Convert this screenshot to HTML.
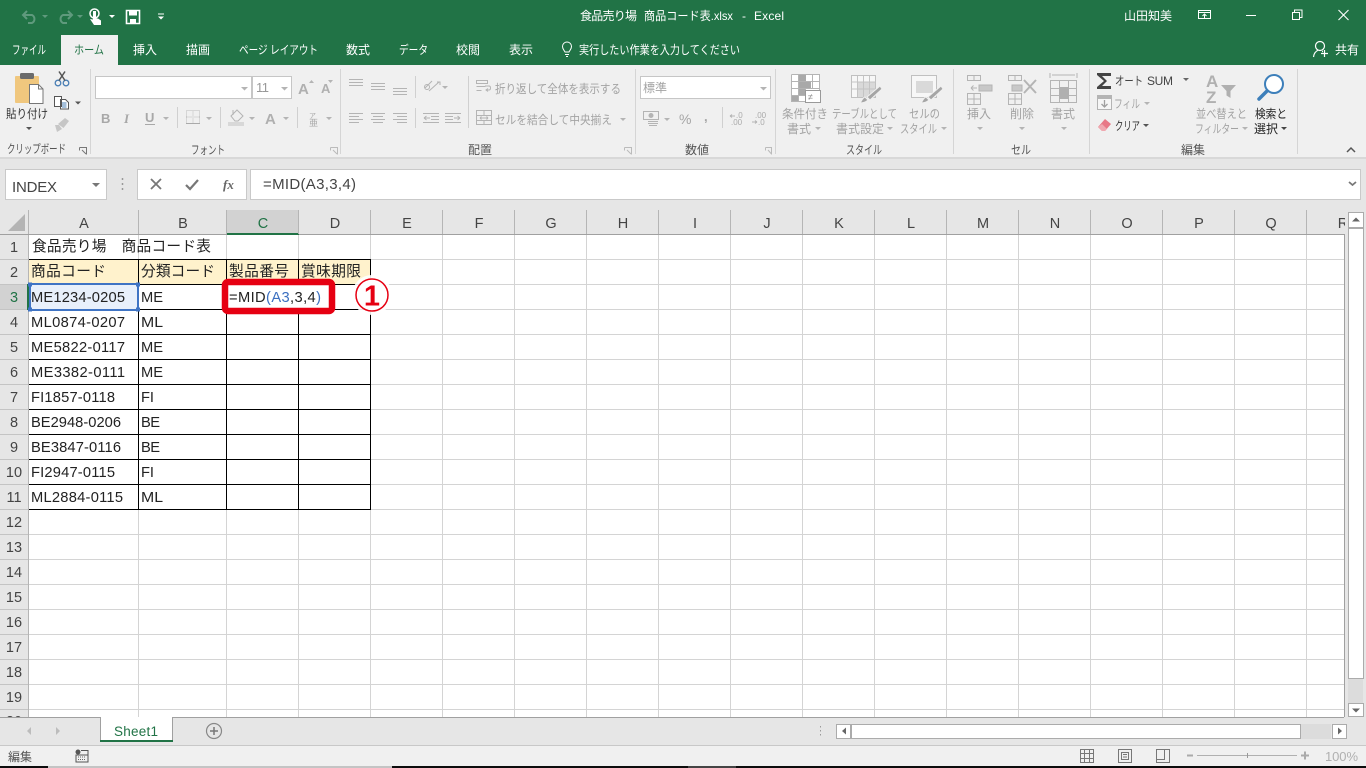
<!DOCTYPE html>
<html lang="ja"><head><meta charset="utf-8"><title>Excel</title>
<style>
html,body{margin:0;padding:0;width:1366px;height:768px;overflow:hidden;background:#fff}
svg{display:block}
text{font-family:"Liberation Sans","Noto Sans CJK JP",sans-serif;white-space:pre}
.w{fill:#fff;font-size:12px}
.d{fill:#a3a3a3;font-size:12px}
.c{fill:#222;font-size:14.7px}
.h{fill:#444;font-size:14.5px;text-anchor:middle}
.ic{fill:none;stroke:#b4b4b4;stroke-width:1}
.ar{fill:#b4b4b4}
</style></head><body>
<svg width="1366" height="768" viewBox="0 0 1366 768" xmlns="http://www.w3.org/2000/svg">
<!-- backgrounds -->
<rect width="1366" height="65" fill="#217346"/>
<rect y="65" width="1366" height="93" fill="#f0f0f0"/>
<rect y="157" width="1366" height="2" fill="#d8d8d8"/>
<rect y="159" width="1366" height="51" fill="#e6e6e6"/>
<rect x="61" y="35" width="57" height="30" fill="#f0f0f0"/>

<!-- QAT -->
<g fill="none" stroke="#5f9a7d" stroke-width="2">
<path d="M24 15 H32 A4.500 4.500 0 0 1 32 23 H28"/><path d="M27 11 L23 15 L27 19"/>
<path d="M71 15 H63 A4.500 4.500 0 0 0 63 23 H67"/><path d="M68 11 L72 15 L68 19"/>
</g>
<path d="M42 15h6l-3 3zM77 15h6l-3 3z" fill="#5f9a7d"/>
<circle cx="94.500" cy="13.500" r="4.500" fill="none" stroke="#fff" stroke-width="1.500"/>
<rect x="93" y="11" width="3" height="8" fill="#fff"/>
<path d="M90 19l3 0.500v-1h5l3 2v4.500h-7z" fill="#fff"/>
<path d="M109 15h6l-3 3z" fill="#fff"/>
<path d="M126.500 10.500h13v13h-13z" fill="none" stroke="#fff" stroke-width="1.600"/>
<rect x="129" y="11" width="8" height="4.500" fill="#fff"/><rect x="130" y="19" width="6" height="4.500" fill="#fff"/>
<path d="M158 13.500h6v1h-6zM158 16.500h6l-3 3z" fill="#fff"/>

<!-- title -->
<text x="580" y="20" class="w" textLength="57">食品売り場</text>
<text x="644" y="20" class="w" textLength="89" lengthAdjust="spacingAndGlyphs">商品コード表.xlsx</text>
<text x="742" y="20" class="w">-</text>
<text x="754" y="20" class="w" textLength="30">Excel</text>
<text x="1124" y="20" class="w" textLength="48">山田知美</text>
<g fill="none" stroke="#fff">
<path d="M1198.500 10.500h12v8h-12zM1198.500 12.500h12M1204.500 18v-4M1202.500 16l2-2 2 2"/>
<path d="M1246 15.500h10" />
<path d="M1292.500 12.500h7v7h-7zM1294.500 12v-2h7.500v7.500h-2"/>
<path d="M1338.500 10l10 10M1348.500 10l-10 10" stroke-width="1.100"/>
</g>

<!-- tabs -->
<text x="12" y="54" class="w" textLength="34" lengthAdjust="spacingAndGlyphs">ファイル</text>
<text x="74" y="54" font-size="12" fill="#217346" textLength="30" lengthAdjust="spacingAndGlyphs">ホーム</text>
<text x="133" y="54" class="w" textLength="24">挿入</text>
<text x="186" y="54" class="w" textLength="24">描画</text>
<text x="239" y="54" class="w" textLength="79" lengthAdjust="spacingAndGlyphs">ページ レイアウト</text>
<text x="346" y="54" class="w" textLength="24">数式</text>
<text x="399" y="54" class="w" textLength="29" lengthAdjust="spacingAndGlyphs">データ</text>
<text x="456" y="54" class="w" textLength="24">校閲</text>
<text x="509" y="54" class="w" textLength="24">表示</text>
<path d="M565 52c-1-2-2.500-3-2.500-5.500a4.500 4.500 0 0 1 9 0c0 2.500-1.500 3.500-2.500 5.500zM565 54.500h4M566 56.500h2" fill="none" stroke="#fff"/>
<text x="579" y="54" class="w" textLength="161" lengthAdjust="spacingAndGlyphs">実行したい作業を入力してください</text>
<circle cx="1320" cy="46" r="4.500" fill="none" stroke="#fff" stroke-width="1.200"/>
<path d="M1313.500 57c.5-4 2.500-6 5-7M1322 51.500h1" fill="none" stroke="#fff" stroke-width="1.200"/>
<path d="M1321 53.500h7M1324.500 50v7" fill="none" stroke="#fff" stroke-width="1.200"/>
<text x="1335" y="54" class="w" textLength="24">共有</text>

<!-- group separators -->
<path d="M90.500 69v85M340.500 69v85M635.500 69v85M775.500 69v85M953.500 69v85M1089.500 69v85M1297.500 69v85" stroke="#d5d5d5" fill="none"/>

<!-- clipboard -->
<rect x="15" y="76" width="24" height="27" rx="1" fill="#f0c77e"/>
<rect x="20" y="73" width="14" height="6" rx="1.500" fill="#6b6b6b"/>
<path d="M29.500 84.500h9l4.500 4.500v14.500h-13.500z" fill="#fff" stroke="#777"/>
<path d="M38.500 84.500v4.500h4.500" fill="none" stroke="#777"/>
<text x="6" y="118" font-size="12" fill="#333" textLength="42" lengthAdjust="spacingAndGlyphs">貼り付け</text>
<path d="M26 127h6l-3 3z" fill="#555"/>
<circle cx="58" cy="83" r="2.800" fill="none" stroke="#4a7fb5" stroke-width="1.300"/><circle cx="66" cy="83" r="2.800" fill="none" stroke="#4a7fb5" stroke-width="1.300"/>
<path d="M59 80.500l6-9M65 80.500l-6-9" stroke="#555" stroke-width="1.500" fill="none"/>
<path d="M54.500 96.500h7v10h-7zM60.500 99.500h5l3 3v6.500h-8z" fill="#fff" stroke="#555"/>
<path d="M62 103h4.500M62 105h4.500M62 107h4.500" stroke="#4a7fb5"/>
<path d="M75 101.500h6l-3 3z" fill="#555"/>
<path d="M58 124l7-6 4 3-5.500 7zM55 125l4 0 3 4-5 3z" fill="#c6c6c6"/>
<text x="7" y="153" font-size="12" fill="#555" textLength="59" lengthAdjust="spacingAndGlyphs">クリップボード</text>
<path d="M79.500 147.500h7v7M79.500 147.500v3M82 150l4 4" fill="none" stroke="#777"/>

<!-- font -->
<rect x="95.500" y="76.500" width="156" height="22" fill="#fff" stroke="#c6c6c6"/>
<rect x="252.500" y="76.500" width="39" height="22" fill="#fff" stroke="#c6c6c6"/>
<text x="256" y="92" font-size="13" fill="#999" textLength="13">11</text>
<path d="M241 87h7l-3.500 3.500zM281 87h7l-3.500 3.500z" class="ar"/>
<text x="298" y="94" font-size="15" fill="#b0b0b0" font-weight="bold">A</text><path d="M309 83l2.500-3 2.500 3z" class="ar"/>
<text x="321" y="93" font-size="13" fill="#b0b0b0" font-weight="bold">A</text><path d="M328 80h5l-2.500 3z" class="ar"/>
<text x="101" y="123" font-size="13" fill="#a8a8a8" font-weight="bold">B</text>
<text x="124" y="123" font-size="13" fill="#a8a8a8" font-weight="bold" font-style="italic" style="font-family:'Liberation Serif',serif">I</text>
<text x="145" y="122" font-size="13" fill="#a8a8a8" font-weight="bold">U</text><path d="M145 124.500h10" stroke="#a8a8a8"/>
<path d="M163 117h6l-3 3zM206 117h6l-3 3zM249 117h6l-3 3zM283 117h6l-3 3zM326 117h6l-3 3z" class="ar"/>
<path d="M177.500 107v21M220.500 107v21M297.500 107v21" stroke="#d0d0d0"/>
<path d="M186.500 110.500h13v13h-13zM193 110.500v13M186.500 117h13" fill="none" stroke="#bbb" stroke-dasharray="1 1"/>
<path d="M186 123.500h14" stroke="#aaa"/>
<path d="M231 116l6-6 6 6-5 5h-3zM233 110v5" fill="none" stroke="#b4b4b4"/>
<rect x="228" y="122" width="16" height="4" fill="#d8d8d8"/>
<text x="265" y="124" font-size="15" fill="#b0b0b0" font-weight="bold">A</text>
<text x="309" y="118" font-size="7" fill="#aaa">ア</text><text x="309" y="126" font-size="9" fill="#aaa">亜</text>
<text x="191" y="154" font-size="12" fill="#555" textLength="34" lengthAdjust="spacingAndGlyphs">フォント</text>
<path d="M330.500 147.500h7v7M330.500 147.500v3M333 150l4 4" fill="none" stroke="#bbb"/>

<!-- alignment -->
<path class="ic" d="M349 79.500h14M349 82.500h14M349 85.500h14M371 83.500h14M371 86.500h14M371 89.500h14M393 88.500h14M393 91.500h14M393 94.500h14"/>
<path class="ic" d="M349 113.500h14M349 116.500h10M349 119.500h14M349 122.500h10M371 113.500h14M373 116.500h10M371 119.500h14M373 122.500h10M393 113.500h14M397 116.500h10M393 119.500h14M397 122.500h10"/>
<path d="M415.500 76v22M415.500 108v20M468.500 76v52" stroke="#d0d0d0"/>
<path class="ic" d="M425 88l7-7M429 91l10-9M437 82h3v3"/>
<circle cx="427" cy="87" r="2.500" class="ic"/>
<path d="M442 86h6l-3 3z" class="ar"/>
<path class="ic" d="M423 113.500h16M431 116.500h8M431 119.500h8M423 122.500h16M424 118h6M424 118l2.500-2M424 118l2.500 2M445 113.500h16M445 116.500h8M445 119.500h8M445 122.500h16M460 118h-6M460 118l-2.500-2M460 118l-2.500 2"/>
<path class="ic" d="M476.500 80.500h11v3h-11zM476.500 86.500h9M476.500 90.500h5M485 86h4c2 0 2 4 0 4h-3M488 88.500l-2 1.500 2 1.500"/>
<text x="495" y="93" class="d" textLength="126" lengthAdjust="spacingAndGlyphs">折り返して全体を表示する</text>
<path class="ic" d="M476.500 110.500h15v14h-15zM476.500 115.500h15M476.500 120.500h15M484 110.500v5M484 120.500v4M480 118h8M480 118l1.500-1.500M480 118l1.500 1.500M488 118l-1.500-1.500M488 118l-1.500 1.500"/>
<text x="495" y="124" class="d" textLength="117" lengthAdjust="spacingAndGlyphs">セルを結合して中央揃え</text>
<path d="M620 118h6l-3 3z" class="ar"/>
<text x="468" y="154" font-size="12" fill="#555" textLength="24">配置</text>
<path d="M624.500 147.500h7v7M624.500 147.500v3M627 150l4 4" fill="none" stroke="#bbb"/>

<!-- number -->
<rect x="640.500" y="76.500" width="130" height="22" fill="#fff" stroke="#c6c6c6"/>
<text x="643" y="92" class="d" textLength="24">標準</text>
<path d="M760 87h7l-3.500 3.500z" class="ar"/>
<path class="ic" d="M643.500 111.500h15v8h-15z"/><circle cx="651" cy="115.500" r="2.500" fill="#b4b4b4"/>
<path class="ic" d="M648 121.500h10M648 123.500h10M649 125.500h8"/>
<path d="M664 118h6l-3 3z" class="ar"/>
<text x="679" y="124" font-size="14" fill="#a5a5a5" textLength="13">%</text>
<text x="704" y="121" font-size="13" fill="#a5a5a5" font-weight="bold">,</text>
<path d="M722.500 107v21" stroke="#d0d0d0"/>
<text x="736" y="118" font-size="8" fill="#aaa">.0</text><text x="731" y="125" font-size="8" fill="#aaa">.00</text>
<path class="ic" d="M730 116h5M730 116l2-1.500M730 116l2 1.500"/>
<text x="755" y="118" font-size="8" fill="#aaa">.00</text><text x="758" y="125" font-size="8" fill="#aaa">.0</text>
<path class="ic" d="M752 122h5M757 122l-2-1.500M757 122l-2 1.500"/>
<text x="685" y="154" font-size="12" fill="#555" textLength="24">数値</text>
<path d="M765.500 147.500h6v7M765.500 147.500v3M768 150l3.500 4" fill="none" stroke="#bbb"/>

<!-- styles -->
<rect x="791" y="74" width="28" height="28" fill="#fff"/>
<path class="ic" d="M791.500 74.500h28v22M791.500 74.500v27h14M791.500 81.500h28M791.500 88.500h28M791.500 95.500h14M798.500 74.500v27M805.500 74.500v20M812.500 74.500v14"/>
<path d="M799 75h7v6h-7zM799 82h12v6h-12zM799 89h6v6h-6zM792 96h6v5h-6z" fill="#a9a9a9"/>
<rect x="805.500" y="90.500" width="15" height="12" fill="#fff" stroke="#999"/>
<text x="808" y="100" font-size="9" fill="#888">≠</text>
<rect x="851.500" y="75.500" width="24" height="22" fill="#f7f7f7" stroke="#c0c0c0"/>
<rect x="857" y="82" width="18" height="15" fill="#d9d9d9"/>
<path d="M851.500 82h24M851.500 89h24M857.500 76v21M863.500 76v21M869.500 76v21" stroke="#c4c4c4" fill="none"/>
<path d="M880 86l-13 11 3 3 12-11zM865 97c-3 1-3 4-5 6 3 0 6-1 8-3z" fill="#a5a5a5" stroke="#f0f0f0"/>
<rect x="911.500" y="75.500" width="25" height="22" fill="#f7f7f7" stroke="#c0c0c0"/>
<rect x="916" y="81" width="17" height="12" fill="#d9d9d9"/>
<path d="M941 86l-13 11 3 3 12-11zM926 97c-3 1-3 4-5 6 3 0 6-1 8-3z" fill="#a5a5a5" stroke="#f0f0f0"/>
<text x="782" y="118" class="d" textLength="46" lengthAdjust="spacingAndGlyphs">条件付き</text>
<text x="787" y="133" class="d" textLength="24">書式</text><path d="M815 127h6l-3 3z" class="ar"/>
<text x="832" y="118" class="d" textLength="65" lengthAdjust="spacingAndGlyphs">テーブルとして</text>
<text x="836" y="133" class="d" textLength="48">書式設定</text><path d="M887 127h6l-3 3z" class="ar"/>
<text x="909" y="118" class="d" textLength="31" lengthAdjust="spacingAndGlyphs">セルの</text>
<text x="900" y="133" class="d" textLength="37" lengthAdjust="spacingAndGlyphs">スタイル</text><path d="M941 127h6l-3 3z" class="ar"/>
<text x="846" y="154" font-size="12" fill="#555" textLength="36" lengthAdjust="spacingAndGlyphs">スタイル</text>

<!-- cells -->
<path class="ic" d="M967.500 75.500h13v5h-13zM974 75.500v5M967.500 93.500h13v11h-13zM974 93.500v11M967.500 99h13M971 88h6M971 88l2.500-2.500M971 88l2.500 2.500"/>
<rect x="979" y="85" width="13" height="6" fill="#c8c8c8" stroke="#b4b4b4"/>
<path class="ic" d="M1008.500 75.500h13v5h-13zM1015 75.500v5M1008.500 93.500h13v11h-13zM1015 93.500v11M1008.500 99h13"/>
<rect x="1012" y="85" width="10" height="6" fill="#c8c8c8" stroke="#b4b4b4"/>
<path d="M1024 80l12 13M1036 80l-12 13" stroke="#b4b4b4" stroke-width="2"/>
<path class="ic" d="M1050 73v5M1077 73v5M1052 75h23M1050.500 80.500h26v22h-26zM1050.500 88.500h26M1050.500 95.500h26M1059.500 80.500v22M1068.500 80.500v22"/>
<rect x="1059" y="87" width="10" height="12" fill="#b0b0b0"/>
<text x="967" y="118" class="d" textLength="24">挿入</text>
<text x="1010" y="118" class="d" textLength="24">削除</text>
<text x="1051" y="118" class="d" textLength="24">書式</text>
<path d="M977 127h6l-3 3zM1019 127h6l-3 3zM1061 127h6l-3 3z" class="ar"/>
<text x="1011" y="154" font-size="12" fill="#555" textLength="20" lengthAdjust="spacingAndGlyphs">セル</text>

<!-- editing -->
<path d="M1111 73h-14v2l7 6-7 6v2h14v-3h-9l5-5-5-5h9z" fill="#444"/>
<text x="1115" y="85" font-size="12" fill="#444" textLength="28" lengthAdjust="spacingAndGlyphs">オート</text>
<text x="1147" y="85" font-size="12" fill="#444" textLength="26">SUM</text>
<path d="M1183 78h6l-3 3z" fill="#666"/>
<rect x="1097.500" y="95.500" width="14" height="14" fill="#f6f6f6" stroke="#b4b4b4"/><rect x="1098" y="96" width="13" height="3" fill="#b4b4b4"/>
<path d="M1104.500 100v7M1101.500 104l3 3 3-3" fill="none" stroke="#a0a0a0" stroke-width="1.300"/>
<text x="1114" y="108" class="d" textLength="26" lengthAdjust="spacingAndGlyphs">フィル</text>
<path d="M1144 102h6l-3 3z" class="ar"/>
<path d="M1105 119l6 5-6 7-3 0-4-4z" fill="#e87886"/>
<path d="M1098 127l4 4h3l2-2-5-5z" fill="#f0a8b0"/>
<text x="1115" y="130" font-size="12" fill="#333" textLength="25" lengthAdjust="spacingAndGlyphs">クリア</text>
<path d="M1143 124h6l-3 3z" fill="#555"/>
<text x="1206" y="87" font-size="17" fill="#b0b0b0" font-weight="bold" textLength="12">A</text>
<text x="1206" y="103" font-size="17" fill="#b0b0b0" font-weight="bold" textLength="12">Z</text>
<path d="M1221 85h15l-5.500 6v7l-4-2.500v-4.500z" fill="#b0b0b0"/>
<circle cx="1274" cy="84" r="9" fill="#fff" stroke="#3d7fba" stroke-width="2"/>
<path d="M1267 91l-8 8" stroke="#3d7fba" stroke-width="3.500" stroke-linecap="round"/>
<text x="1196" y="118" class="d" textLength="51" lengthAdjust="spacingAndGlyphs">並べ替えと</text>
<text x="1195" y="133" class="d" textLength="44" lengthAdjust="spacingAndGlyphs">フィルター</text><path d="M1242 127h6l-3 3z" class="ar"/>
<text x="1255" y="118" font-size="12" fill="#222" textLength="32" lengthAdjust="spacingAndGlyphs">検索と</text>
<text x="1254" y="133" font-size="12" fill="#222" textLength="24">選択</text><path d="M1281 127h6l-3 3z" fill="#444"/>
<text x="1181" y="154" font-size="12" fill="#555" textLength="24">編集</text>
<path d="M1347 152l4-4 4 4" fill="none" stroke="#555" stroke-width="1.500"/>

<!-- formula bar -->
<rect x="5.500" y="169.500" width="101" height="30" fill="#fff" stroke="#c9c9c9"/>
<text x="12" y="192" font-size="15" fill="#444" textLength="45">INDEX</text>
<path d="M92 183h8l-4 4z" fill="#777"/>
<path d="M122.500 178v2M122.500 183v2M122.500 188v2" stroke="#999" stroke-width="1.500"/>
<rect x="137.500" y="169.500" width="109" height="30" fill="#fff" stroke="#c9c9c9"/>
<path d="M151 179l10 10M161 179l-10 10" stroke="#777" stroke-width="1.800" fill="none"/>
<path d="M186 185l4 4 8-9" stroke="#777" stroke-width="2.200" fill="none"/>
<text x="223" y="189" font-size="13" font-style="italic" font-weight="bold" fill="#666" style="font-family:'Liberation Serif',serif">fx</text>
<rect x="250.500" y="169.500" width="1110" height="30" fill="#fff" stroke="#c9c9c9"/>
<text x="263" y="189" font-size="15" fill="#444" textLength="93">=MID(A3,3,4)</text>
<path d="M1349 182l3.500 3 3.500-3" fill="none" stroke="#777" stroke-width="1.800"/>

<!-- sheet -->
<rect x="0" y="210" width="1345" height="25" fill="#e6e6e6"/>
<rect x="0" y="235" width="28" height="482" fill="#e6e6e6"/>
<rect x="227" y="210" width="71" height="24" fill="#d2d2d2"/>
<rect x="227" y="233" width="72" height="2" fill="#217346"/>
<rect x="0" y="285" width="28" height="24" fill="#d2d2d2"/>
<path d="M25 214v17H8z" fill="#b4b4b4"/>
<path d="M28.500 210v507M138.500 210v24M226.500 210v24M298.500 210v24M370.500 210v24M442.500 210v24M514.500 210v24M586.500 210v24M658.500 210v24M730.500 210v24M802.500 210v24M874.500 210v24M946.500 210v24M1018.500 210v24M1090.500 210v24M1162.500 210v24M1234.500 210v24M1306.500 210v24" stroke="#b5b5b5" fill="none"/>
<path d="M0 234.500h227M299 234.500h1046" stroke="#a0a0a0"/>
<path d="M29 259.500h1316M29 284.500h1316M29 309.500h1316M29 334.500h1316M29 359.500h1316M29 384.500h1316M29 409.500h1316M29 434.500h1316M29 459.500h1316M29 484.500h1316M29 509.500h1316M29 534.500h1316M29 559.500h1316M29 584.500h1316M29 609.500h1316M29 634.500h1316M29 659.500h1316M29 684.500h1316M29 709.500h1316" stroke="#d4d4d4"/>
<path d="M138.500 235v482M226.500 235v482M298.500 235v482M370.500 235v482M442.500 235v482M514.500 235v482M586.500 235v482M658.500 235v482M730.500 235v482M802.500 235v482M874.500 235v482M946.500 235v482M1018.500 235v482M1090.500 235v482M1162.500 235v482M1234.500 235v482M1306.500 235v482" stroke="#d4d4d4"/>
<path d="M0 259.500h28M0 284.500h28M0 309.500h28M0 334.500h28M0 359.500h28M0 384.500h28M0 409.500h28M0 434.500h28M0 459.500h28M0 484.500h28M0 509.500h28M0 534.500h28M0 559.500h28M0 584.500h28M0 609.500h28M0 634.500h28M0 659.500h28M0 684.500h28M0 709.500h28" stroke="#c4c4c4"/>
<path d="M1344.500 234v483" stroke="#a0a0a0"/>

<rect x="29" y="260" width="341" height="24" fill="#fff2cc"/>
<path d="M29 259.500h342M29 284.500h342M29 309.500h342M29 334.500h342M29 359.500h342M29 384.500h342M29 409.500h342M29 434.500h342M29 459.500h342M29 484.500h342M29 509.500h342M138.500 259v251M226.500 259v251M298.500 259v251M370.500 259v251" stroke="#000" fill="none"/>

<!-- selected A3 -->
<rect x="29" y="285" width="109" height="24" fill="#e8f0fb"/>
<rect x="30" y="284" width="108" height="26" fill="none" stroke="#3f74c4" stroke-width="2"/>
<rect x="27" y="284" width="2" height="26" fill="#217346"/>
<path d="M28 282.500h4v4h-4zM136 282.500h4v4h-4zM28 307.500h4v4h-4zM136 307.500h4v4h-4z" fill="#3f74c4"/>

<!-- column headers -->
<text class="h" x="84" y="228">A</text><text class="h" x="183" y="228">B</text>
<text class="h" x="263" y="228" style="fill:#217346">C</text><text class="h" x="335" y="228">D</text>
<text class="h" x="407" y="228">E</text><text class="h" x="479" y="228">F</text><text class="h" x="551" y="228">G</text>
<text class="h" x="623" y="228">H</text><text class="h" x="695" y="228">I</text><text class="h" x="767" y="228">J</text>
<text class="h" x="839" y="228">K</text><text class="h" x="911" y="228">L</text><text class="h" x="983" y="228">M</text>
<text class="h" x="1055" y="228">N</text><text class="h" x="1127" y="228">O</text><text class="h" x="1199" y="228">P</text>
<text class="h" x="1271" y="228">Q</text><text class="h" x="1343" y="228">R</text>
<!-- row headers -->
<text class="h" x="14" y="252">1</text><text class="h" x="14" y="277">2</text>
<text class="h" x="14" y="302" style="fill:#217346">3</text><text class="h" x="14" y="327">4</text>
<text class="h" x="14" y="352">5</text><text class="h" x="14" y="377">6</text>
<text class="h" x="14" y="402">7</text><text class="h" x="14" y="427">8</text>
<text class="h" x="14" y="452">9</text><text class="h" x="14" y="477">10</text>
<text class="h" x="14" y="502">11</text><text class="h" x="14" y="527">12</text>
<text class="h" x="14" y="552">13</text><text class="h" x="14" y="577">14</text>
<text class="h" x="14" y="602">15</text><text class="h" x="14" y="627">16</text>
<text class="h" x="14" y="652">17</text><text class="h" x="14" y="677">18</text>
<text class="h" x="14" y="702">19</text><text class="h" x="14" y="726">20</text>
<rect x="0" y="717" width="1366" height="28" fill="#e6e6e6"/>
<path d="M0 717.500h100M172 717.500h1172" stroke="#a0a0a0"/>

<!-- cell text -->
<text class="c" x="32" y="251" textLength="179">食品売り場　商品コード表</text>
<text class="c" x="31" y="276" textLength="75">商品コード</text>
<text class="c" x="141" y="276" textLength="74">分類コード</text>
<text class="c" x="229" y="276" textLength="60">製品番号</text>
<text class="c" x="301" y="276" textLength="60">賞味期限</text>
<text class="c" x="31" y="302" textLength="94">ME1234-0205</text><text class="c" x="141" y="302" textLength="22">ME</text>
<text class="c" x="31" y="327" textLength="94">ML0874-0207</text><text class="c" x="141" y="327" textLength="22" lengthAdjust="spacingAndGlyphs">ML</text>
<text class="c" x="31" y="352" textLength="94">ME5822-0117</text><text class="c" x="141" y="352" textLength="22">ME</text>
<text class="c" x="31" y="377" textLength="94">ME3382-0111</text><text class="c" x="141" y="377" textLength="22">ME</text>
<text class="c" x="31" y="402" textLength="84">FI1857-0118</text><text class="c" x="141" y="402" textLength="13">FI</text>
<text class="c" x="31" y="427" textLength="90">BE2948-0206</text><text class="c" x="141" y="427" textLength="19">BE</text>
<text class="c" x="31" y="452" textLength="90">BE3847-0116</text><text class="c" x="141" y="452" textLength="19">BE</text>
<text class="c" x="31" y="477" textLength="84">FI2947-0115</text><text class="c" x="141" y="477" textLength="13">FI</text>
<text class="c" x="31" y="502" textLength="92">ML2884-0115</text><text class="c" x="141" y="502" textLength="22" lengthAdjust="spacingAndGlyphs">ML</text>

<!-- red callout -->
<rect x="225" y="282" width="107" height="29" rx="3" fill="#fff" stroke="#e60012" stroke-width="6.500"/>
<text x="229" y="302" font-size="14.700" fill="#222" textLength="92"><tspan>=MID</tspan><tspan fill="#3b6fc0">(A3</tspan><tspan>,3,4</tspan><tspan fill="#3b6fc0">)</tspan></text>
<circle cx="372" cy="295" r="20" fill="#fff" opacity=".9"/>
<circle cx="372" cy="295" r="16" fill="#fff" stroke="#e60012" stroke-width="1.500"/>
<text x="372" y="305.500" font-size="29" font-weight="bold" fill="#e60012" text-anchor="middle">1</text>

<!-- vertical scrollbar -->
<rect x="1345" y="210" width="21" height="507" fill="#e6e6e6"/>
<rect x="1348" y="212" width="15" height="504" fill="#dcdcdc"/>
<rect x="1348.500" y="212.500" width="15" height="15" fill="#fff" stroke="#ababab"/>
<rect x="1348.500" y="228.500" width="15" height="450" fill="#fff" stroke="#ababab"/>
<rect x="1348.500" y="703.500" width="15" height="13" fill="#fff" stroke="#ababab"/>
<path d="M1352 221.500l4-4 4 4zM1352 708.500h8l-4 4z" fill="#666"/>

<!-- tab bar -->
<path d="M100.500 717v24h72v-24" fill="#fff" stroke="#a0a0a0"/>
<rect x="100" y="740" width="73" height="2" fill="#217346"/>
<text x="114" y="736" font-size="13.500" fill="#217346" textLength="44">Sheet1</text>
<path d="M31 727v8l-4-4zM56 727v8l4-4z" fill="#bcbcbc"/>
<circle cx="214" cy="731" r="7.500" fill="none" stroke="#888" stroke-width="1.200"/>
<path d="M210 731h8M214 727v8" stroke="#777" stroke-width="1.500"/>
<path d="M820.500 726v1.500M820.500 730v1.500M820.500 734v1.500" stroke="#999"/>
<rect x="836.500" y="724.500" width="14" height="14" fill="#fff" stroke="#ababab"/>
<path d="M846 727.500v7l-4-3.500z" fill="#666"/>
<rect x="851" y="724" width="480" height="15" fill="#dcdcdc"/>
<rect x="851.500" y="724.500" width="449" height="14" fill="#fff" stroke="#ababab"/>
<rect x="1332.500" y="724.500" width="14" height="14" fill="#fff" stroke="#ababab"/>
<path d="M1338 727.500v7l4-3.500z" fill="#666"/>

<!-- status bar -->
<rect y="745" width="1366" height="21" fill="#f0f0f0"/>
<path d="M0 745.500h1366" stroke="#c8c8c8"/>
<text x="8" y="761" font-size="12" fill="#555" textLength="24">編集</text>
<circle cx="78" cy="752" r="2.500" fill="#555"/>
<path d="M81 750.500h7V762H76v-7h12" fill="none" stroke="#555"/>
<path d="M78 757h8M78 759.500h8" stroke="#666" stroke-dasharray="1 1"/>
<path d="M1080.500 749.500h13v13h-13zM1084.500 749.500v13M1089.500 749.500v13M1080.500 753.500h13M1080.500 758.500h13" fill="none" stroke="#777"/>
<path d="M1118.500 749.500h13v13h-13zM1121.500 752.500h7v7h-7zM1123 754.500h4M1123 757h4" fill="none" stroke="#777"/>
<path d="M1156.500 749.500h13v13h-13zM1156.500 759.500h8v-10" fill="none" stroke="#777"/>
<path d="M1187 755.500h6" stroke="#aaa" stroke-width="2"/>
<path d="M1197 755.500h100" stroke="#b0b0b0"/>
<path d="M1247.500 753v5" stroke="#999"/>
<path d="M1301 755.500h8M1305 751.500v8" stroke="#aaa" stroke-width="2"/>
<text x="1325" y="761" font-size="13" fill="#b0b0b0" textLength="33">100%</text>

<!-- bottom strip -->
<rect y="766" width="1366" height="2" fill="#0c0c0c"/>
<rect x="48" y="766" width="344" height="2" fill="#c4c4c4"/>
<rect x="688" y="766" width="48" height="2" fill="#444"/>
</svg>
</body></html>
